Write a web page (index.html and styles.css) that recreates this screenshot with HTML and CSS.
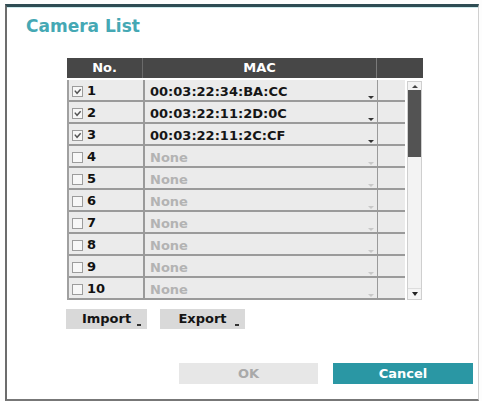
FILE: index.html
```html
<!DOCTYPE html>
<html>
<head>
<meta charset="utf-8">
<link rel="stylesheet" href="styles.css">
</head>
<body>
<div class="dialog">
  <div class="title">Camera List</div>
  <div class="table">
    <div class="thead">
      <div class="th c-no">No.</div>
      <div class="th c-mac">MAC</div>
      <div class="th c-x"></div>
    </div>
    <div class="tbody">
      <div class="rows">
        <div class="row"><div class="c-no"><span class="cb on"><svg viewBox="0 0 10 10"><polyline points="2,4 4.5,7 8.5,2.5"/></svg></span>1</div><div class="c-mac mac">00:03:22:34:BA:CC<span class="dd"></span></div><div class="c-x"></div></div>
        <div class="row"><div class="c-no"><span class="cb on"><svg viewBox="0 0 10 10"><polyline points="2,4 4.5,7 8.5,2.5"/></svg></span>2</div><div class="c-mac mac">00:03:22:11:2D:0C<span class="dd"></span></div><div class="c-x"></div></div>
        <div class="row"><div class="c-no"><span class="cb on"><svg viewBox="0 0 10 10"><polyline points="2,4 4.5,7 8.5,2.5"/></svg></span>3</div><div class="c-mac mac">00:03:22:11:2C:CF<span class="dd"></span></div><div class="c-x"></div></div>
        <div class="row"><div class="c-no"><span class="cb"></span>4</div><div class="c-mac none">None<span class="dd off"></span></div><div class="c-x"></div></div>
        <div class="row"><div class="c-no"><span class="cb"></span>5</div><div class="c-mac none">None<span class="dd off"></span></div><div class="c-x"></div></div>
        <div class="row"><div class="c-no"><span class="cb"></span>6</div><div class="c-mac none">None<span class="dd off"></span></div><div class="c-x"></div></div>
        <div class="row"><div class="c-no"><span class="cb"></span>7</div><div class="c-mac none">None<span class="dd off"></span></div><div class="c-x"></div></div>
        <div class="row"><div class="c-no"><span class="cb"></span>8</div><div class="c-mac none">None<span class="dd off"></span></div><div class="c-x"></div></div>
        <div class="row"><div class="c-no"><span class="cb"></span>9</div><div class="c-mac none">None<span class="dd off"></span></div><div class="c-x"></div></div>
        <div class="row"><div class="c-no"><span class="cb"></span>10</div><div class="c-mac none">None<span class="dd off"></span></div><div class="c-x"></div></div>
      </div>
      <div class="scroll">
        <div class="sb-btn"><span class="arr up"></span></div>
        <div class="thumb"></div>
        <div class="track"></div>
        <div class="sb-btn down"><span class="arr dn"></span></div>
      </div>
    </div>
  </div>
  <div class="tools">
    <div class="tbtn imp">Import<span class="mk"></span></div>
    <div class="tbtn exp">Export<span class="mk"></span></div>
  </div>
  <div class="footer">
    <div class="fbtn ok">OK</div>
    <div class="fbtn cancel">Cancel</div>
  </div>
</div>
</body>
</html>
```
FILE: styles.css
```css
html, body {
  margin: 0;
  padding: 0;
  background: #fdfdfd;
}
body {
  font-family: "DejaVu Sans", "Liberation Sans", sans-serif;
  font-size: 13px;
}
.dialog {
  box-sizing: border-box;
  margin: 4px 3px 0 5px;
  height: 397px;
  background: #fff;
  border-top: 3px solid #2e4c53;
  border-left: 2px solid #6c6c6c;
  border-right: 1px solid #d0d0d0;
  border-bottom: 2px solid #777;
  box-shadow: inset 0 1px 0 #cdeaec;
  display: flex;
  flex-direction: column;
}
.title {
  margin: 7px 0 0 19px;
  height: 24px;
  line-height: 24px;
  font-size: 17px;
  font-weight: bold;
  color: #45a8b4;
}
.table {
  margin: 20px 0 0 60px;
  width: 356px;
}
.thead {
  display: flex;
  height: 20px;
  background: #474747;
  color: #fff;
  font-weight: bold;
  line-height: 20px;
}
.th {
  text-align: center;
  box-sizing: border-box;
}
.thead .c-no { width: 76px; border-right: 1px solid #6a6a6a; }
.thead .c-mac { width: 234px; border-right: 1px solid #7a7a7a; }
.thead .c-x { flex: 1; }
.tbody {
  display: flex;
  padding-top: 2px;
}
.rows {
  width: 338px;
  background: #9a9a9a;
  border-left: 2px solid #a0a0a0;
  box-sizing: border-box;
}
.row {
  display: flex;
  height: 20px;
  margin-bottom: 2px;
  font-weight: bold;
  line-height: 20px;
  padding: 0;
}
.row > div {
  background: #ebebeb;
  box-sizing: border-box;
  padding-top: 2px;
}
.row .c-no {
  width: 74px;
  margin-right: 2px;
  display: flex;
  align-items: center;
  color: #111;
}
.row .c-mac {
  width: 232px;
  margin-right: 1px;
  padding-left: 5px;
  position: relative;
}
.row .c-x { flex: 1; }
.mac { color: #161616; }
.none { color: #b3b3b3; }
.cb {
  width: 9px;
  height: 9px;
  margin: 0 4px 0 3px;
  border: 1px solid #9c9c9c;
  background: #f7f7f7;
  display: inline-flex;
}
.cb svg {
  width: 9px;
  height: 9px;
}
.cb polyline {
  fill: none;
  stroke: #555;
  stroke-width: 1.6;
}
.dd {
  position: absolute;
  right: 3px;
  bottom: 1px;
  width: 0;
  height: 0;
  border-left: 3px solid transparent;
  border-right: 3px solid transparent;
  border-top: 3px solid #333;
}
.dd.off { border-top-color: #c8c8c8; }
.scroll {
  margin: 1px 0 0 2px;
  width: 15px;
  height: 219px;
  box-sizing: border-box;
  border: 1px solid #cfcfcf;
  background: #f3f3f3;
  display: flex;
  flex-direction: column;
}
.sb-btn {
  height: 8px;
  display: flex;
  align-items: center;
  justify-content: center;
  background: #f4f4f4;
}
.sb-btn.down { height: 10px; border-top: 1px solid #ddd; }
.arr {
  width: 0;
  height: 0;
  border-left: 3px solid transparent;
  border-right: 3px solid transparent;
}
.arr.up { border-bottom: 3px solid #444; }
.arr.dn { border-top: 4px solid #222; }
.thumb {
  height: 67px;
  background: #535353;
}
.track { flex: 1; }
.tools {
  display: flex;
  gap: 13px;
  margin: 9px 0 0 59px;
}
.tbtn {
  height: 20px;
  line-height: 20px;
  background: #d9d9d9;
  font-weight: bold;
  color: #141414;
  text-align: center;
  position: relative;
  box-sizing: border-box;
}
.tbtn.imp { width: 81px; }
.tbtn.exp { width: 85px; }
.mk {
  position: absolute;
  right: 6px;
  bottom: 3px;
  width: 4px;
  height: 2px;
  background: #333;
}
.footer {
  display: flex;
  justify-content: flex-end;
  gap: 15px;
  margin: 34px 5px 0 0;
}
.fbtn {
  width: 139px;
  height: 21px;
  line-height: 21px;
  text-align: center;
  font-weight: bold;
}
.ok {
  background: #e7e7e7;
  color: #a9a9a9;
}
.cancel {
  width: 140px;
  background: #2a97a4;
  color: #fff;
}
```
